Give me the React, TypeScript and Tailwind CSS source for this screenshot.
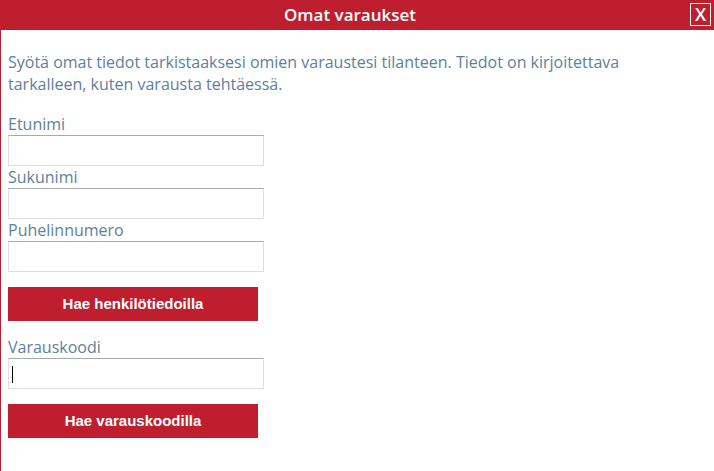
const field = (label: string, focused = false) => (
  <div className="flex flex-col">
    <label className="text-[16px] leading-[22px] text-[#5d7fa0]">{label}</label>
    <div className="relative h-[31px] w-[256px] border border-[#dedede] border-t-[#a9a9a9] bg-white">
      {focused && <span className="absolute left-[3px] top-[7px] h-[17px] w-px bg-black" />}
    </div>
  </div>
);

export default function App() {
  return (
    <div className="flex h-[471px] w-[714px] flex-col bg-white font-['Open_Sans',sans-serif]">
      <div className="relative flex h-[30px] shrink-0 items-center justify-center bg-[#be1e2d] pr-[14px]">
        <span className="text-[17px] font-semibold text-white">Omat varaukset</span>
        <div className="absolute right-[3px] top-[3px] flex h-[23px] w-[21px] items-center justify-center border border-white text-[18px] font-semibold text-white">
          X
        </div>
      </div>
      <div className="flex flex-1 flex-col border-l-[1.5px] border-[#be1e2d] pl-[7px] pt-[21px]">
        <p className="w-[660px] text-[16px] leading-[22px] text-[#5d7fa0]">
          Syötä omat tiedot tarkistaaksesi omien varaustesi tilanteen. Tiedot on kirjoitettava tarkalleen, kuten varausta tehtäessä.
        </p>
        <div className="mt-[18px] flex flex-col">
          {field('Etunimi')}
          {field('Sukunimi')}
          {field('Puhelinnumero')}
        </div>
        <button className="mt-[15px] h-[34px] w-[250px] bg-[#be1e2d] font-['Liberation_Sans',sans-serif] text-[15px] font-bold text-white">
          Hae henkilötiedoilla
        </button>
        <div className="mt-[15px]">{field('Varauskoodi', true)}</div>
        <button className="mt-[15px] h-[34px] w-[250px] bg-[#be1e2d] font-['Liberation_Sans',sans-serif] text-[15px] font-bold text-white">
          Hae varauskoodilla
        </button>
      </div>
    </div>
  );
}
